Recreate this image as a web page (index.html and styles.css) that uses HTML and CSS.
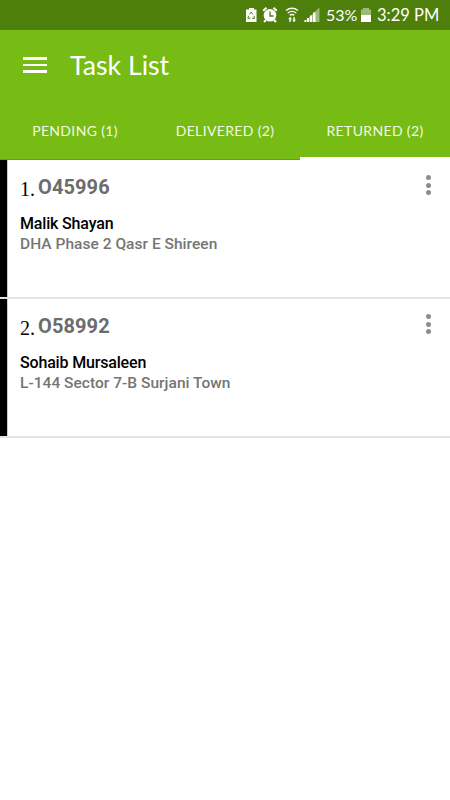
FILE: index.html
```
<!DOCTYPE html>
<html lang="en">
<head>
    <meta charset="UTF-8">
    <meta name="viewport" content="width=device-width, initial-scale=1.0">
    <title>Task List</title>
    <link rel="stylesheet" href="styles.css">
</head>
<body>
    <div class="status-bar">
        <svg class="status-icons" width="76" height="30" viewBox="0 0 76 30">
            <!-- battery saver -->
            <path fill="#fff" d="M4 8h5v1.500h2.500V22H1V9.500h3z"/>
            <path fill="none" stroke="#4e7f0b" stroke-width="1" d="M4.600 14.300L6.200 12l1.600 2.300M8.900 15.800l.8 2.500H7.200M5.300 18.300H2.800l.9-2.500"/>
            <!-- alarm -->
            <circle cx="25" cy="15.300" r="6.300" fill="#fff"/>
            <path fill="none" stroke="#fff" stroke-width="2" d="M18.200 10.800l3.300-3M31.800 10.800l-3.300-3M21 20l-2 2M29 20l2 2"/>
            <path fill="none" stroke="#4e7f0b" stroke-width="1.300" d="M25 11.500v4.500h3.500"/>
            <!-- wifi -->
            <path fill="none" stroke="#fff" stroke-width="1.300" d="M41 10.500q6-4.500 12 0M42.800 13q4.200-3.200 8.400 0M44.700 15.300q2.300-1.600 4.600 0"/>
            <path fill="#fff" d="M45.200 16.800l1.800 2.400h-1.200V22h-1.400v-2.800h-1.200zM49 22.300l-1.800-2.500h1.200V17h1.400v2.800H51z"/>
            <!-- signal -->
            <path fill="#fff" opacity=".45" d="M59 22L74.500 7.500V22z"/>
            <path fill="#fff" d="M59.500 20H61v2h-1.500zM62 18h2v4h-2zM65 15.500h2V22h-2zM68 12.500h2.500V22H68z"/>
        </svg>
        <span class="percent">53%</span>
        <svg class="battery" width="12" height="16" viewBox="0 0 12 16">
            <path fill="#fff" opacity=".45" d="M3 1h6v1.500h2V8H1V2.500h2z"/>
            <path fill="#fff" d="M1 8h10v7H1z"/>
        </svg>
        <span class="clock">3:29 PM</span>
    </div>

    <header>
        <div class="toolbar">
            <button class="menu-button" aria-label="Menu">
                <span></span>
                <span></span>
                <span></span>
            </button>
            <h1>Task List</h1>
        </div>
        <nav class="tabs">
            <a class="tab">PENDING (1)</a>
            <a class="tab">DELIVERED (2)</a>
            <a class="tab active">RETURNED (2)</a>
        </nav>
    </header>

    <main>
        <div class="task">
            <div class="task-info">
                <div class="task-title">
                    <span class="number">1.</span>
                    <span class="order">O45996</span>
                </div>
                <div class="name">Malik Shayan</div>
                <div class="address">DHA Phase 2 Qasr E Shireen</div>
            </div>
            <button class="more" aria-label="More">
                <span></span>
                <span></span>
                <span></span>
            </button>
        </div>
        <div class="task">
            <div class="task-info">
                <div class="task-title">
                    <span class="number">2.</span>
                    <span class="order">O58992</span>
                </div>
                <div class="name">Sohaib Mursaleen</div>
                <div class="address">L-144 Sector 7-B Surjani Town</div>
            </div>
            <button class="more" aria-label="More">
                <span></span>
                <span></span>
                <span></span>
            </button>
        </div>
    </main>
</body>
</html>
```
FILE: styles.css
```
* {
    box-sizing: border-box;
}

body {
    margin: 0;
    min-height: 100vh;
    background-color: #fff;
    font-family: Roboto, sans-serif;
}

button {
    border: none;
    padding: 0;
    background: none;
    cursor: pointer;
}

.status-bar {
    display: flex;
    align-items: center;
    height: 30px;
    padding-left: 245px;
    background-color: #4e7f0b;
    color: #fff;
    font-family: Lato, sans-serif;
    font-size: 16.500px;
    white-space: nowrap;
}

.percent {
    width: 33px;
    margin-left: 5px;
    padding-bottom: 1px;
    font-size: 16px;
}

.battery {
    margin-left: 1px;
}

.clock {
    margin-left: 5px;
}

header {
    height: 130px;
    background-color: #77bc14;
    color: #fff;
}

.toolbar {
    display: flex;
    align-items: center;
    height: 70px;
    padding-left: 23px;
}

.menu-button {
    display: flex;
    flex-direction: column;
    gap: 4px;
    width: 24px;
}

.menu-button span {
    height: 2.500px;
    background-color: #fff;
}

h1 {
    margin: 0 0 0 23px;
    font-family: Lato, sans-serif;
    font-size: 26.700px;
    font-weight: 400;
    line-height: 32px;
}

.tabs {
    display: flex;
    height: 60px;
}

.tab {
    flex: 1;
    display: flex;
    align-items: center;
    justify-content: center;
    border-bottom: 1px solid #5da50f;
    padding-top: 2px;
    font-family: Lato, sans-serif;
    font-size: 14px;
    letter-spacing: 0.350px;
    white-space: nowrap;
    color: #f1f8e7;
}

.tab.active {
    border-bottom: 3px solid #fff;
    padding-top: 4px;
}

.task {
    display: flex;
    justify-content: space-between;
    height: 139px;
    border-bottom: 2px solid #e4e4e4;
    background: linear-gradient(to right, #000 7px, #ccc 7px, #ccc 8px, #fff 8px);
}

.task-info {
    padding: 15px 0 0 20px;
}

.task-title {
    display: flex;
    align-items: flex-start;
    height: 38px;
    line-height: 24px;
}

.number {
    width: 18px;
    padding-top: 2px;
    font-family: "Liberation Serif", serif;
    font-size: 20px;
}

.order {
    font-size: 20px;
    font-weight: 700;
    letter-spacing: 0.100px;
    color: #6c6c6c;
}

.name {
    font-size: 16px;
    font-weight: 500;
    letter-spacing: -0.170px;
    line-height: 21px;
    color: #000;
}

.address {
    font-size: 15.500px;
    font-weight: 500;
    letter-spacing: 0.030px;
    line-height: 21px;
    color: #757575;
}

.more {
    display: flex;
    flex-direction: column;
    align-items: center;
    gap: 2.500px;
    height: 20px;
    margin: 15px 19px 0 0;
}

.more span {
    width: 5px;
    height: 5px;
    border-radius: 50%;
    background-color: #8c8c8c;
}
```
